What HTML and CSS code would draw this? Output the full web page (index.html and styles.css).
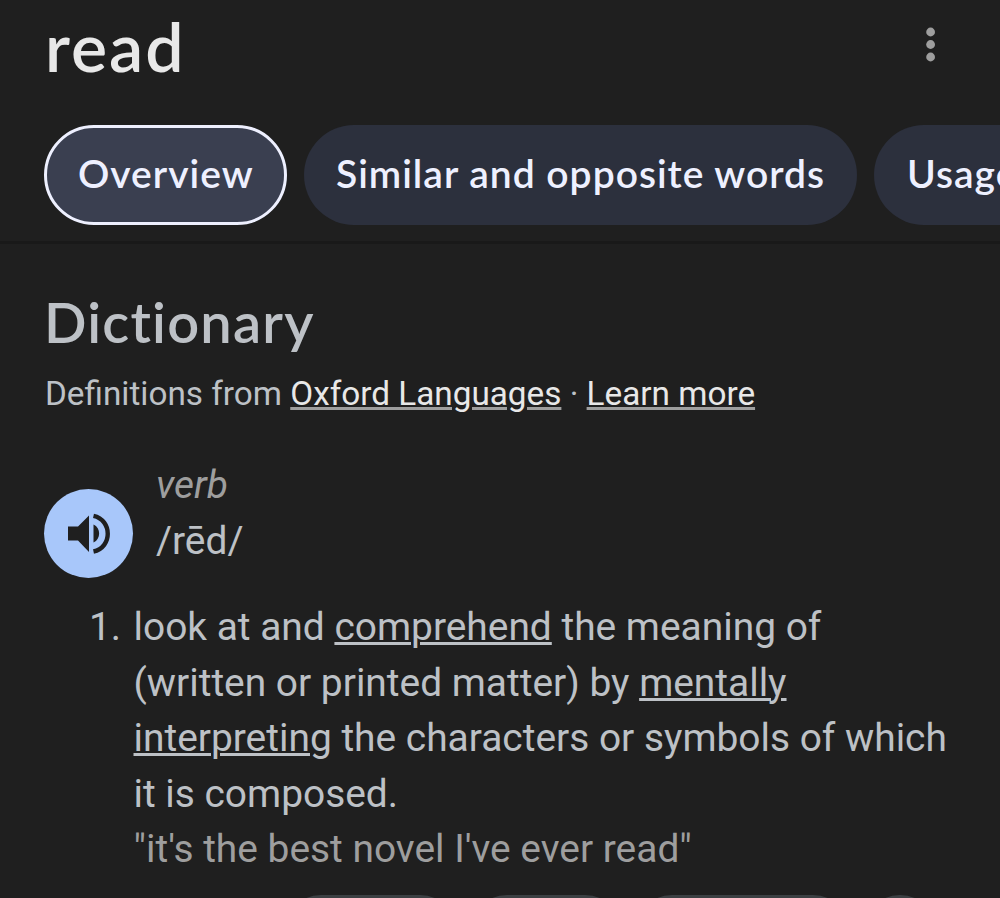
FILE: index.html
```html
<!DOCTYPE html>
<html lang="en">
<head>
    <meta charset="UTF-8">
    <meta name="viewport" content="width=device-width, initial-scale=1.0">
    <title>read</title>
    <link rel="stylesheet" href="styles.css">
</head>
<body>
    <header class="header">
        <h1 class="word">read</h1>
        <button class="menu" type="button" aria-label="More">
            <svg width="10" height="36" viewBox="0 0 10 36">
                <circle cx="4.6" cy="5" r="4.4"/>
                <circle cx="4.6" cy="17.5" r="4.4"/>
                <circle cx="4.6" cy="30" r="4.4"/>
            </svg>
        </button>
    </header>

    <nav class="tabs">
        <a class="tab tab-overview active">Overview</a>
        <a class="tab tab-similar">Similar and opposite words</a>
        <a class="tab tab-usage">Usage examples</a>
    </nav>

    <main class="content">
        <h2 class="section-title">Dictionary</h2>
        <p class="source">Definitions from <a>Oxford Languages</a> · <a>Learn more</a></p>

        <div class="entry">
            <button class="speaker" type="button" aria-label="Listen">
                <svg width="44" height="42" viewBox="0 0 44 42">
                    <path d="M1 13.5H11L22 2.5V39L11 27.5H1Z"/>
                    <path d="M26.5 11.5C34 14.5 34 26.5 26.5 29.5Z"/>
                    <path d="M26.5 2.8C45.5 7 45.5 34.5 26.5 38.5" fill="none" stroke="#1f1f1f" stroke-width="4.4"/>
                </svg>
            </button>
            <div class="entry-text">
                <div class="pos">verb</div>
                <div class="phonetic">/rēd/</div>
            </div>
        </div>

        <div class="definition">
            <span class="number">1.</span>
            <div class="meaning">
                <div>look at and <a>comprehend</a> the meaning of<br>(written or printed matter) by <a>mentally<br>interpreting</a> the characters or symbols of which<br>it is composed.</div>
                <div class="example">"it's the best novel I've ever read"</div>
            </div>
        </div>

        <div class="chips">
            <span class="chip chip-large"></span>
            <span class="chip chip-small"></span>
            <span class="chip chip-wide"></span>
            <span class="chip chip-round"></span>
        </div>
    </main>
</body>
</html>
```
FILE: styles.css
```css
* {
    box-sizing: border-box;
}

body {
    margin: 0;
    height: 898px;
    overflow: hidden;
    background: #1f1f1f;
    color: #bdc1c6;
    font-family: Roboto, Arial, sans-serif;
}

h1, h2, p {
    margin: 0;
    font-weight: normal;
}

button {
    border: none;
    padding: 0;
    background: none;
}

svg {
    display: block;
}

.header {
    display: flex;
    justify-content: space-between;
    height: 125px;
    padding: 7px 64px 0 45px;
}

.word {
    font: 600 68px/78px Lato, sans-serif;
    letter-spacing: 2px;
    color: #e8e8e8;
}

.menu {
    align-self: flex-start;
    margin-top: 20px;
    fill: #9e9e9e;
}

.tabs {
    display: flex;
    gap: 17px;
    height: 119px;
    padding-left: 44px;
    border-bottom: 3px solid #191919;
}

.tab {
    flex-shrink: 0;
    height: 100px;
    padding-left: 32px;
    border-radius: 50px;
    background: #2c303d;
    color: #eef0ff;
    font: 600 39px/96px Lato, sans-serif;
    letter-spacing: 1px;
    white-space: nowrap;
}

.tab.active {
    padding-left: 31px;
    border: 3px solid #eef0ff;
    background: #3a3f50;
    line-height: 90px;
}

.tab-overview {
    width: 243px;
}

.tab-similar {
    width: 553px;
}

.tab-usage {
    padding-left: 33px;
    width: 340px;
}

.content {
    padding: 45px 44px 0;
}

.section-title {
    font: 600 56px/66px Lato, sans-serif;
    letter-spacing: 1.2px;
}

.source {
    height: 102px;
    padding: 16px 0 0 1px;
    font-size: 33.3px;
    line-height: 45px;
    white-space: nowrap;
}

.source a {
    color: #e8e8e8;
    text-decoration: underline #9e9e9e 3px;
}

.entry {
    display: flex;
    height: 142px;
}

.speaker {
    display: flex;
    align-items: center;
    justify-content: center;
    width: 89px;
    height: 89px;
    margin-top: 32px;
    border-radius: 50%;
    background: #a8c7fa;
    fill: #1f1f1f;
}

.entry-text {
    margin-left: 23px;
    font-size: 38.9px;
    line-height: 55.6px;
}

.pos {
    color: #9e9e9e;
    font-style: italic;
}

.definition {
    display: flex;
    height: 296px;
    font-size: 38.9px;
    line-height: 55.5px;
    white-space: nowrap;
}

.number {
    flex-shrink: 0;
    width: 89.5px;
    padding-left: 45px;
}

.meaning a {
    text-decoration: underline 3px;
}

.example {
    color: #9e9e9e;
}

.chips {
    display: flex;
    gap: 15px;
    margin-left: 241px;
}

.chip {
    flex-shrink: 0;
    height: 72px;
    border: 3px solid #3c4043;
    border-radius: 36px;
}

.chip-large {
    width: 171px;
}

.chip-small {
    width: 150px;
}

.chip-wide {
    width: 213px;
}

.chip-round {
    width: 72px;
}
```
